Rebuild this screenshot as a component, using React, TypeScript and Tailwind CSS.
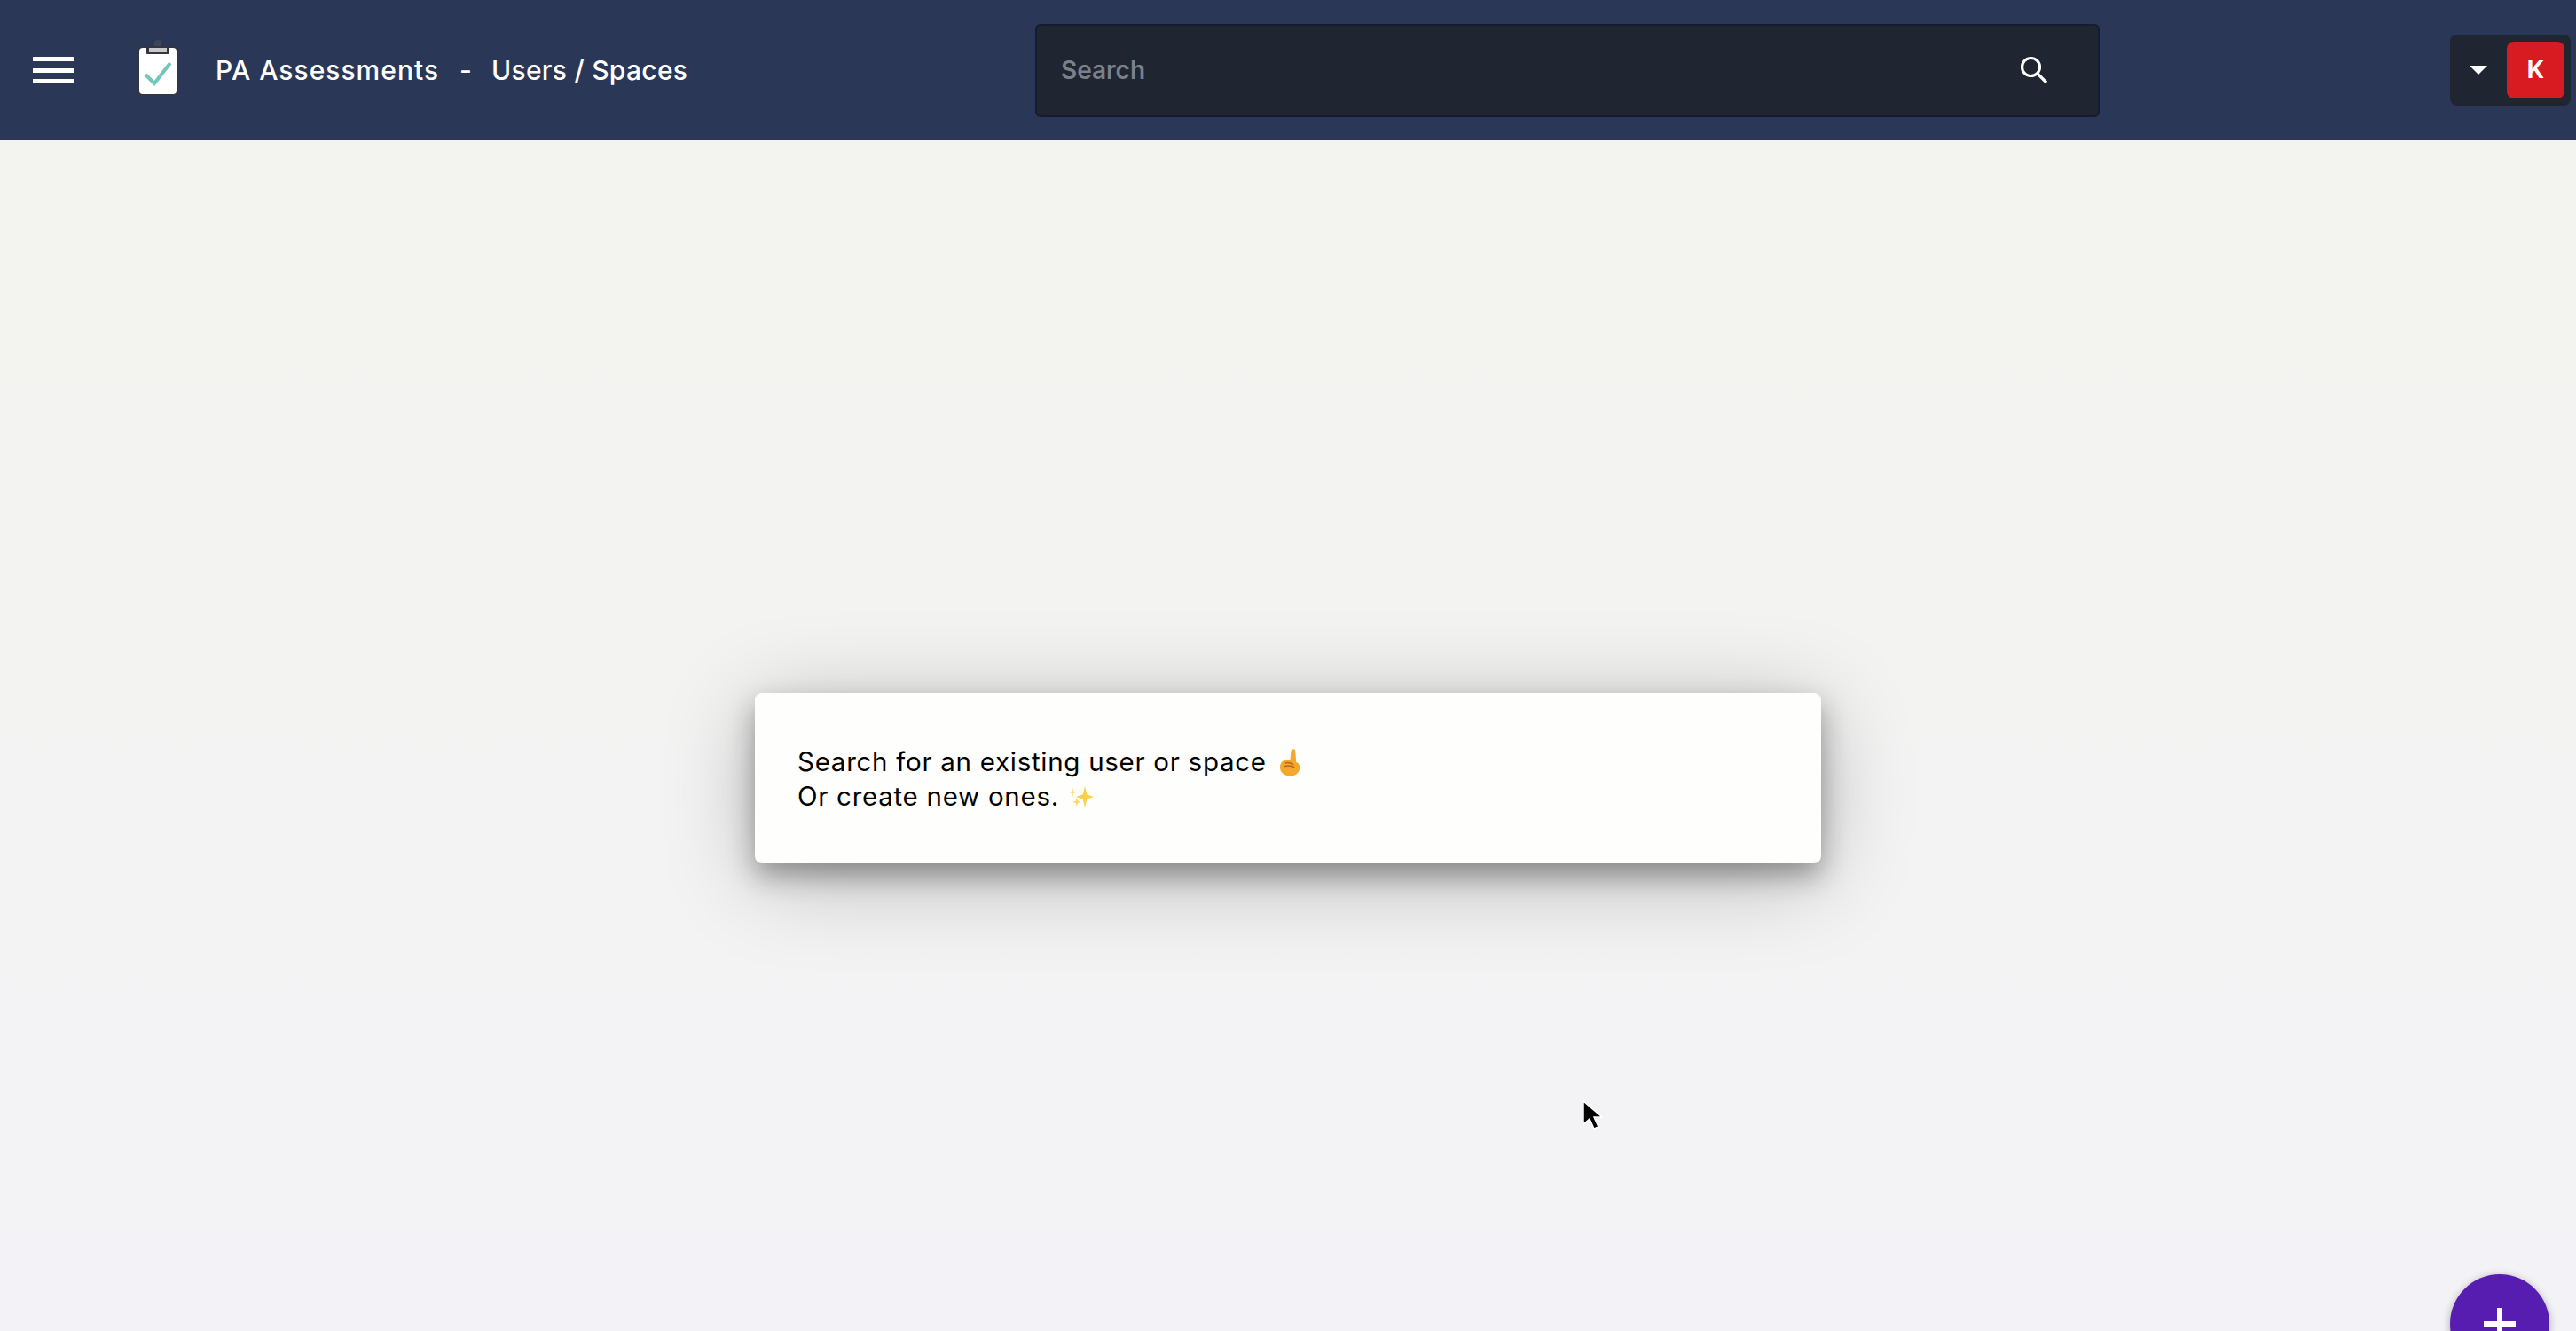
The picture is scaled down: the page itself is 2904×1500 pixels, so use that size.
export default function App() {
  const text = "font-['Inter','Liberation_Sans',sans-serif]";
  return (
    <div className={`relative flex h-[1500px] w-full flex-col overflow-hidden bg-gradient-to-b from-[#f3f3ef] via-[#f3f3f2] to-[#f3f3f7] ${text}`}>
      <header className="flex h-[158px] shrink-0 items-center bg-[#2a3757] pl-[37px] pr-[6px]">
        <button className="flex h-[30px] w-[46px] shrink-0 flex-col justify-between">
          <span className="h-[5px] w-full bg-white" />
          <span className="h-[5px] w-full bg-white" />
          <span className="h-[5px] w-full bg-white" />
        </button>
        <svg className="mb-[9px] ml-[72px] h-[64px] w-[46px] shrink-0" viewBox="0 0 46 64">
          <path d="M19 6a4 4 0 0 1 8 0v6h-8z" fill="#3f4556" />
          <rect x="0" y="9" width="46" height="55" rx="4" fill="#33363f" />
          <rect x="2" y="11" width="42" height="52" rx="4" fill="#fff" />
          <rect x="10" y="9" width="26" height="9" rx="1" fill="#33363f" />
          <rect x="13" y="11" width="20" height="5" fill="#c9c9c9" />
          <path d="M9 41l10 10L37 28" fill="none" stroke="#74c7b8" strokeWidth="4" />
        </svg>
        <div className="ml-[42px] flex w-[924px] shrink-0 items-center text-[30px] font-medium leading-none text-white">
          <span className="tracking-[1px]">PA Assessments</span>
          <span className="ml-[23px]">-</span>
          <span className="ml-[22px] tracking-[0.3px]">Users / Spaces</span>
        </div>
        <div className="flex h-[105px] w-[1200px] shrink-0 items-center rounded-[6px] border-2 border-[#161c30] bg-[#1f2631] pl-[27px] pr-[56px]">
          <span className="flex-1 text-[28px] font-semibold text-[#7b8089]">Search</span>
          <svg className="h-[32px] w-[32px]" viewBox="0 0 32 32" fill="none" stroke="#fff" strokeWidth="3.2">
            <circle cx="12.5" cy="12.5" r="10" />
            <path d="M20 20l10 10" />
          </svg>
        </div>
        <div className="ml-auto flex h-[80px] w-[136px] items-center rounded-[8px] bg-[#1f2631] pl-[22px] pr-[7px]">
          <svg className="h-[10px] w-[20px]" viewBox="0 0 20 10">
            <path d="M0 0h20L10 10z" fill="#fff" />
          </svg>
          <div className="ml-auto flex h-[64px] w-[65px] items-center justify-center rounded-[8px] bg-[#d81b21] text-[27px] font-bold text-white">
            K
          </div>
        </div>
      </header>
      <main className="flex flex-1 justify-center pt-[623px]">
        <div className="h-[192px] w-[1202px] rounded-[8px] bg-[#fefefc] pl-[48px] pt-[58px] text-[29.5px] leading-[39px] tracking-[0.72px] text-black shadow-[0_14px_30px_rgba(0,0,0,0.32),0_16px_100px_rgba(0,0,0,0.26)]">
          <div className="flex items-center">
            <span>Search for an existing user or space</span>
            <svg className="ml-[14px] h-[32px] w-[24px]" viewBox="0 0 25 32">
              <path d="M14 3c1-3 5-3 5 0l1 13c3 1 5 4 4 8-1 5-5 8-11 8-7 0-12-4-12-10 0-4 2-7 5-8 2-1 5-1 7-1z" fill="#f4a92c" />
              <path d="M7 17c3-1 7 0 10 2M6 21c3-1 8-1 12 1" stroke="#b5651d" strokeWidth="1.5" fill="none" />
            </svg>
          </div>
          <div className="flex items-center">
            <span>Or create new ones.</span>
            <svg className="ml-[7px] h-[32px] w-[33px]" viewBox="0 0 36 32">
              <path d="M24 3l2.500 10L35 16l-8.500 3L24 29l-2.500-10L13 16l8.500-3z" fill="#fbd04a" />
              <path d="M9 5l1.300 4 3.200 1.300-3.200 1.300L9 16l-1.300-4.400L4 10.300 7.700 9z" fill="#fde08a" />
              <path d="M14 17l1.300 4 3.200 1.300-3.200 1.300L14 28l-1.300-4.400L9 22.300 12.700 21z" fill="#fcd66a" />
            </svg>
          </div>
        </div>
      </main>
      <button className="absolute left-[2762px] top-[1436px] flex h-[112px] w-[112px] items-start justify-center rounded-full bg-[#571db0] pt-[38px] shadow-[0_2px_10px_rgba(0,0,0,0.3)]">
        <svg className="h-[36px] w-[36px]" viewBox="0 0 36 36">
          <path d="M15 0h6v15h15v6H21v15h-6V21H0v-6h15z" fill="#fff" />
        </svg>
      </button>
      <svg className="absolute left-[1783px] top-[1239px] h-[36px] w-[24px]" viewBox="0 0 24 36">
        <path d="M2 2v26l7-6 5 11 5-2-5-11h9z" fill="#000" stroke="#fff" strokeWidth="1.500" />
      </svg>
    </div>
  );
}
